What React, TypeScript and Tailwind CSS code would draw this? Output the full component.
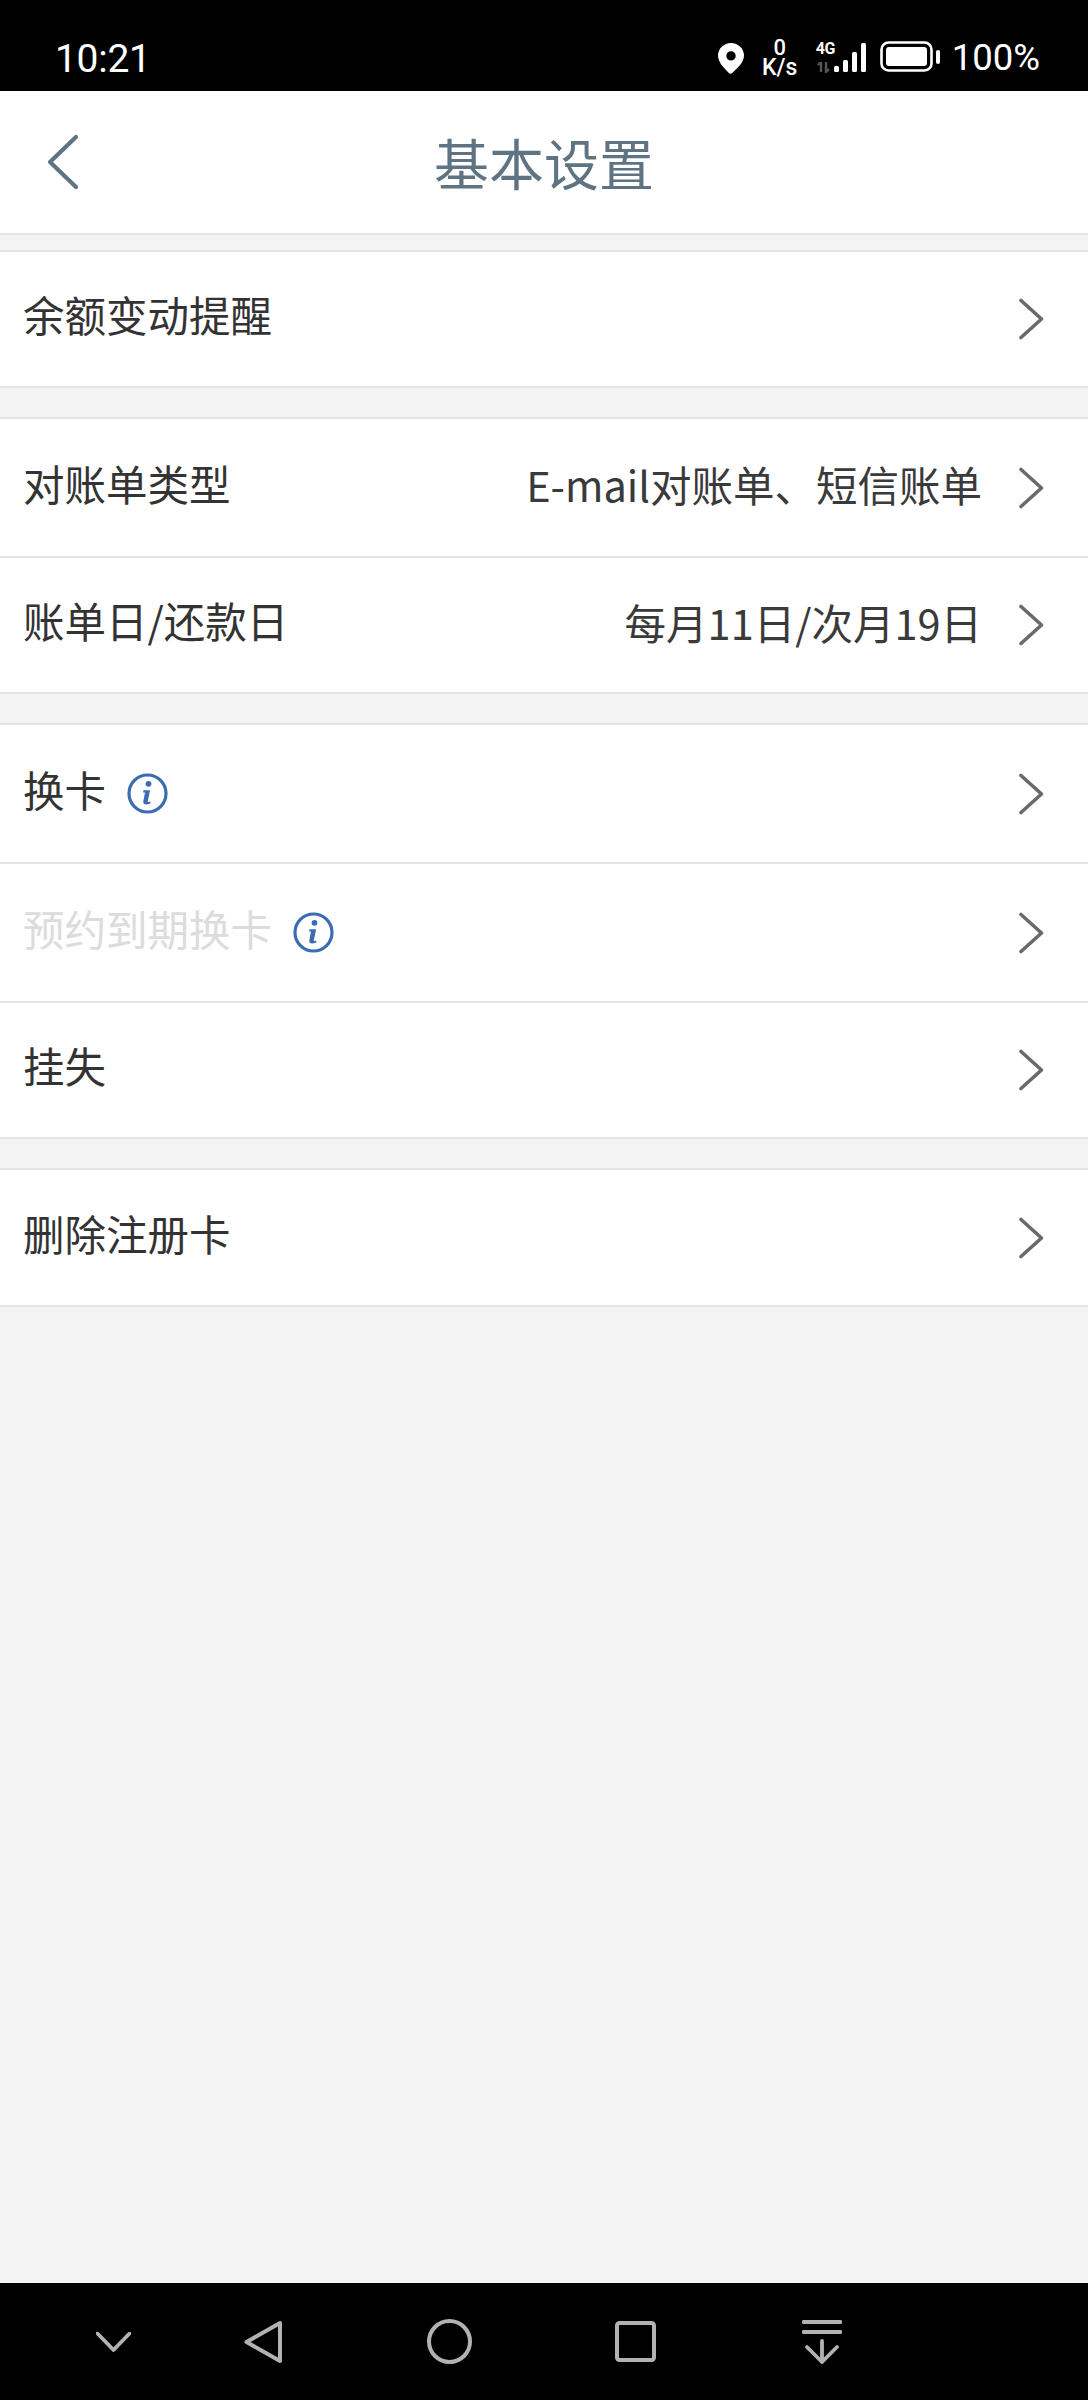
const FONT = "font-['Noto_Sans_CJK_SC','Noto_Sans',sans-serif]";

function Chevron() {
  return (
    <svg width="26" height="42" viewBox="0 0 26 42" fill="none" className="ml-[36px] shrink-0">
      <path d="M3 2.500 23.500 21 3 39.500" stroke="#6a6a6a" strokeWidth="3.600" strokeLinecap="round" strokeLinejoin="round" />
    </svg>
  );
}

function InfoIcon() {
  return (
    <svg width="41" height="41" viewBox="0 0 41 41" fill="none" className="ml-[21px] shrink-0">
      <circle cx="20.500" cy="20.500" r="18.500" stroke="#3a6cb3" strokeWidth="3.200" />
      <circle cx="21.500" cy="10.800" r="2.900" fill="#3a6cb3" />
      <path
        d="M16.500 17.200h6.600l-2.300 11c-.2 1 .5 1.200 2.600.4l-.1 1.800c-3.600 1.700-7.600 1.600-7-1.800l1.700-9.200h-2z"
        fill="#3a6cb3"
      />
    </svg>
  );
}

type RowProps = {
  label: string;
  value?: string;
  info?: boolean;
  disabled?: boolean;
  height: string;
};

function Row({ label, value, info, disabled, height }: RowProps) {
  return (
    <div className={`flex items-center pl-[23px] pr-[44px] ${height}`}>
      <div className="flex flex-1 items-center">
        <span className={`text-[41.5px] leading-none -mt-[8px] ${disabled ? "text-[#dcdcdc]" : "text-[#333333]"}`}>
          {label}
        </span>
        {info ? <InfoIcon /> : null}
      </div>
      {value ? <span className="text-[41.5px] leading-none -mt-[5px] text-[#3a3a3a]">{value}</span> : null}
      <Chevron />
    </div>
  );
}

function Section({ children, className }: { children: React.ReactNode; className: string }) {
  return (
    <section className={`border-y-2 border-[#e4e4e4] bg-white divide-y-2 divide-[#e4e4e4] ${className}`}>
      {children}
    </section>
  );
}

function StatusBar() {
  return (
    <div className="flex h-[91px] items-start justify-between bg-black text-white font-['Roboto',sans-serif]">
      <span className="ml-[55px] mt-[37px] text-[39px] leading-[44px] tracking-[-0.3px]">10:21</span>
      <div className="mr-[48px] mt-[38px] flex items-start">
        <svg width="26" height="31" viewBox="0 0 26 31" className="mt-[5px]">
          <path
            fillRule="evenodd"
            d="M13 0C5.800 0 0 5.600 0 12.600c0 7 6.400 13 11 17.500.9.900 2.400.900 3.300 0C19 25.600 26 19.600 26 12.600 26 5.600 20.200 0 13 0Zm0 8.200a4.700 4.700 0 1 1 0 9.400 4.700 4.700 0 0 1 0-9.400Z"
            fill="#fff"
          />
        </svg>
        <div className="ml-[18px] flex w-[36px] flex-col items-center">
          <span className="text-[22px] leading-[20px] font-medium">0</span>
          <span className="text-[23px] leading-[20px] font-medium">K/s</span>
        </div>
        <div className="ml-[18px] flex w-[18px] flex-col items-start">
          <span className="mt-[3px] text-[16px] leading-[16px] font-bold tracking-[-0.5px]">4G</span>
          <svg width="16" height="11" viewBox="0 0 16 11" className="mt-[5px]">
            <path d="M5 0v10M2 3l3-3M10 0v10l3-3" stroke="#555" strokeWidth="2.400" fill="none" />
          </svg>
        </div>
        <svg width="34" height="32" viewBox="0 0 34 32" className="mt-[3px]">
          <rect x="0" y="25" width="5" height="6" rx="1.500" fill="#fff" />
          <rect x="9" y="19" width="5" height="12" rx="1.500" fill="#fff" />
          <rect x="18" y="11" width="5" height="20" rx="1.500" fill="#fff" />
          <rect x="27" y="2" width="5" height="29" rx="1.500" fill="#fff" />
        </svg>
        <svg width="62" height="32" viewBox="0 0 62 32" className="ml-[12px] mt-[3px]">
          <rect x="1.500" y="1.500" width="50" height="28" rx="7" fill="none" stroke="#fff" strokeWidth="2.600" />
          <rect x="6" y="6" width="41" height="19" rx="3" fill="#fff" />
          <rect x="56" y="9" width="4" height="14" rx="2" fill="#fff" />
        </svg>
        <span className="ml-[10px] text-[36.500px] leading-[40px]">100%</span>
      </div>
    </div>
  );
}

function Header() {
  return (
    <header className="grid h-[144px] grid-cols-[1fr_auto_1fr] items-center border-b-2 border-[#e4e4e4] bg-white">
      <svg width="34" height="58" viewBox="0 0 34 58" fill="none" className="ml-[46px]">
        <path d="M30 4 4 29l26 25" stroke="#5f7482" strokeWidth="4.200" strokeLinecap="round" strokeLinejoin="round" />
      </svg>
      <h1 className="text-[55px] font-normal leading-none -mt-[2px] text-[#5f7482]">基本设置</h1>
      <div />
    </header>
  );
}

function BottomNav() {
  const stroke = "#b2b2b2";
  return (
    <nav className="flex h-[117px] items-center bg-black">
      <svg width="35" height="20" viewBox="0 0 35 20" fill="none" className="ml-[96px]">
        <path d="M1.500 1.500 17.500 18 33.500 1.500" stroke={stroke} strokeWidth="3.800" strokeLinecap="round" strokeLinejoin="round" />
      </svg>
      <svg width="38" height="44" viewBox="0 0 38 44" fill="none" className="ml-[113px]">
        <path d="M36 3v38L2.500 22Z" stroke={stroke} strokeWidth="4" strokeLinejoin="round" />
      </svg>
      <svg width="45" height="45" viewBox="0 0 45 45" fill="none" className="ml-[145px]">
        <circle cx="22.500" cy="22.500" r="20.500" stroke={stroke} strokeWidth="4" />
      </svg>
      <svg width="41" height="41" viewBox="0 0 41 41" fill="none" className="ml-[143px]">
        <rect x="2" y="2" width="37" height="37" rx="2.500" stroke={stroke} strokeWidth="4" />
      </svg>
      <svg width="40" height="44" viewBox="0 0 40 44" fill="none" className="ml-[146px]">
        <path d="M1.500 2h37M1.500 12h37M20 21v21M5 27l15 15 15-15" stroke={stroke} strokeWidth="3.800" strokeLinecap="round" strokeLinejoin="round" />
      </svg>
    </nav>
  );
}

export default function App() {
  return (
    <div className={`flex h-[2400px] w-[1088px] flex-col bg-[#f3f3f3] ${FONT}`}>
      <StatusBar />
      <Header />
      <main className="flex-1">
        <Section className="mt-[15px]">
          <Row label="余额变动提醒" height="h-[134px]" />
        </Section>
        <Section className="mt-[29px]">
          <Row label="对账单类型" value="E-mail对账单、短信账单" height="h-[139px]" />
          <Row label="账单日/还款日" value="每月11日/次月19日" height="h-[134px]" />
        </Section>
        <Section className="mt-[29px]">
          <Row label="换卡" info height="h-[139px]" />
          <Row label="预约到期换卡" info disabled height="h-[139px]" />
          <Row label="挂失" height="h-[134px]" />
        </Section>
        <Section className="mt-[29px]">
          <Row label="删除注册卡" height="h-[135px]" />
        </Section>
      </main>
      <BottomNav />
    </div>
  );
}
